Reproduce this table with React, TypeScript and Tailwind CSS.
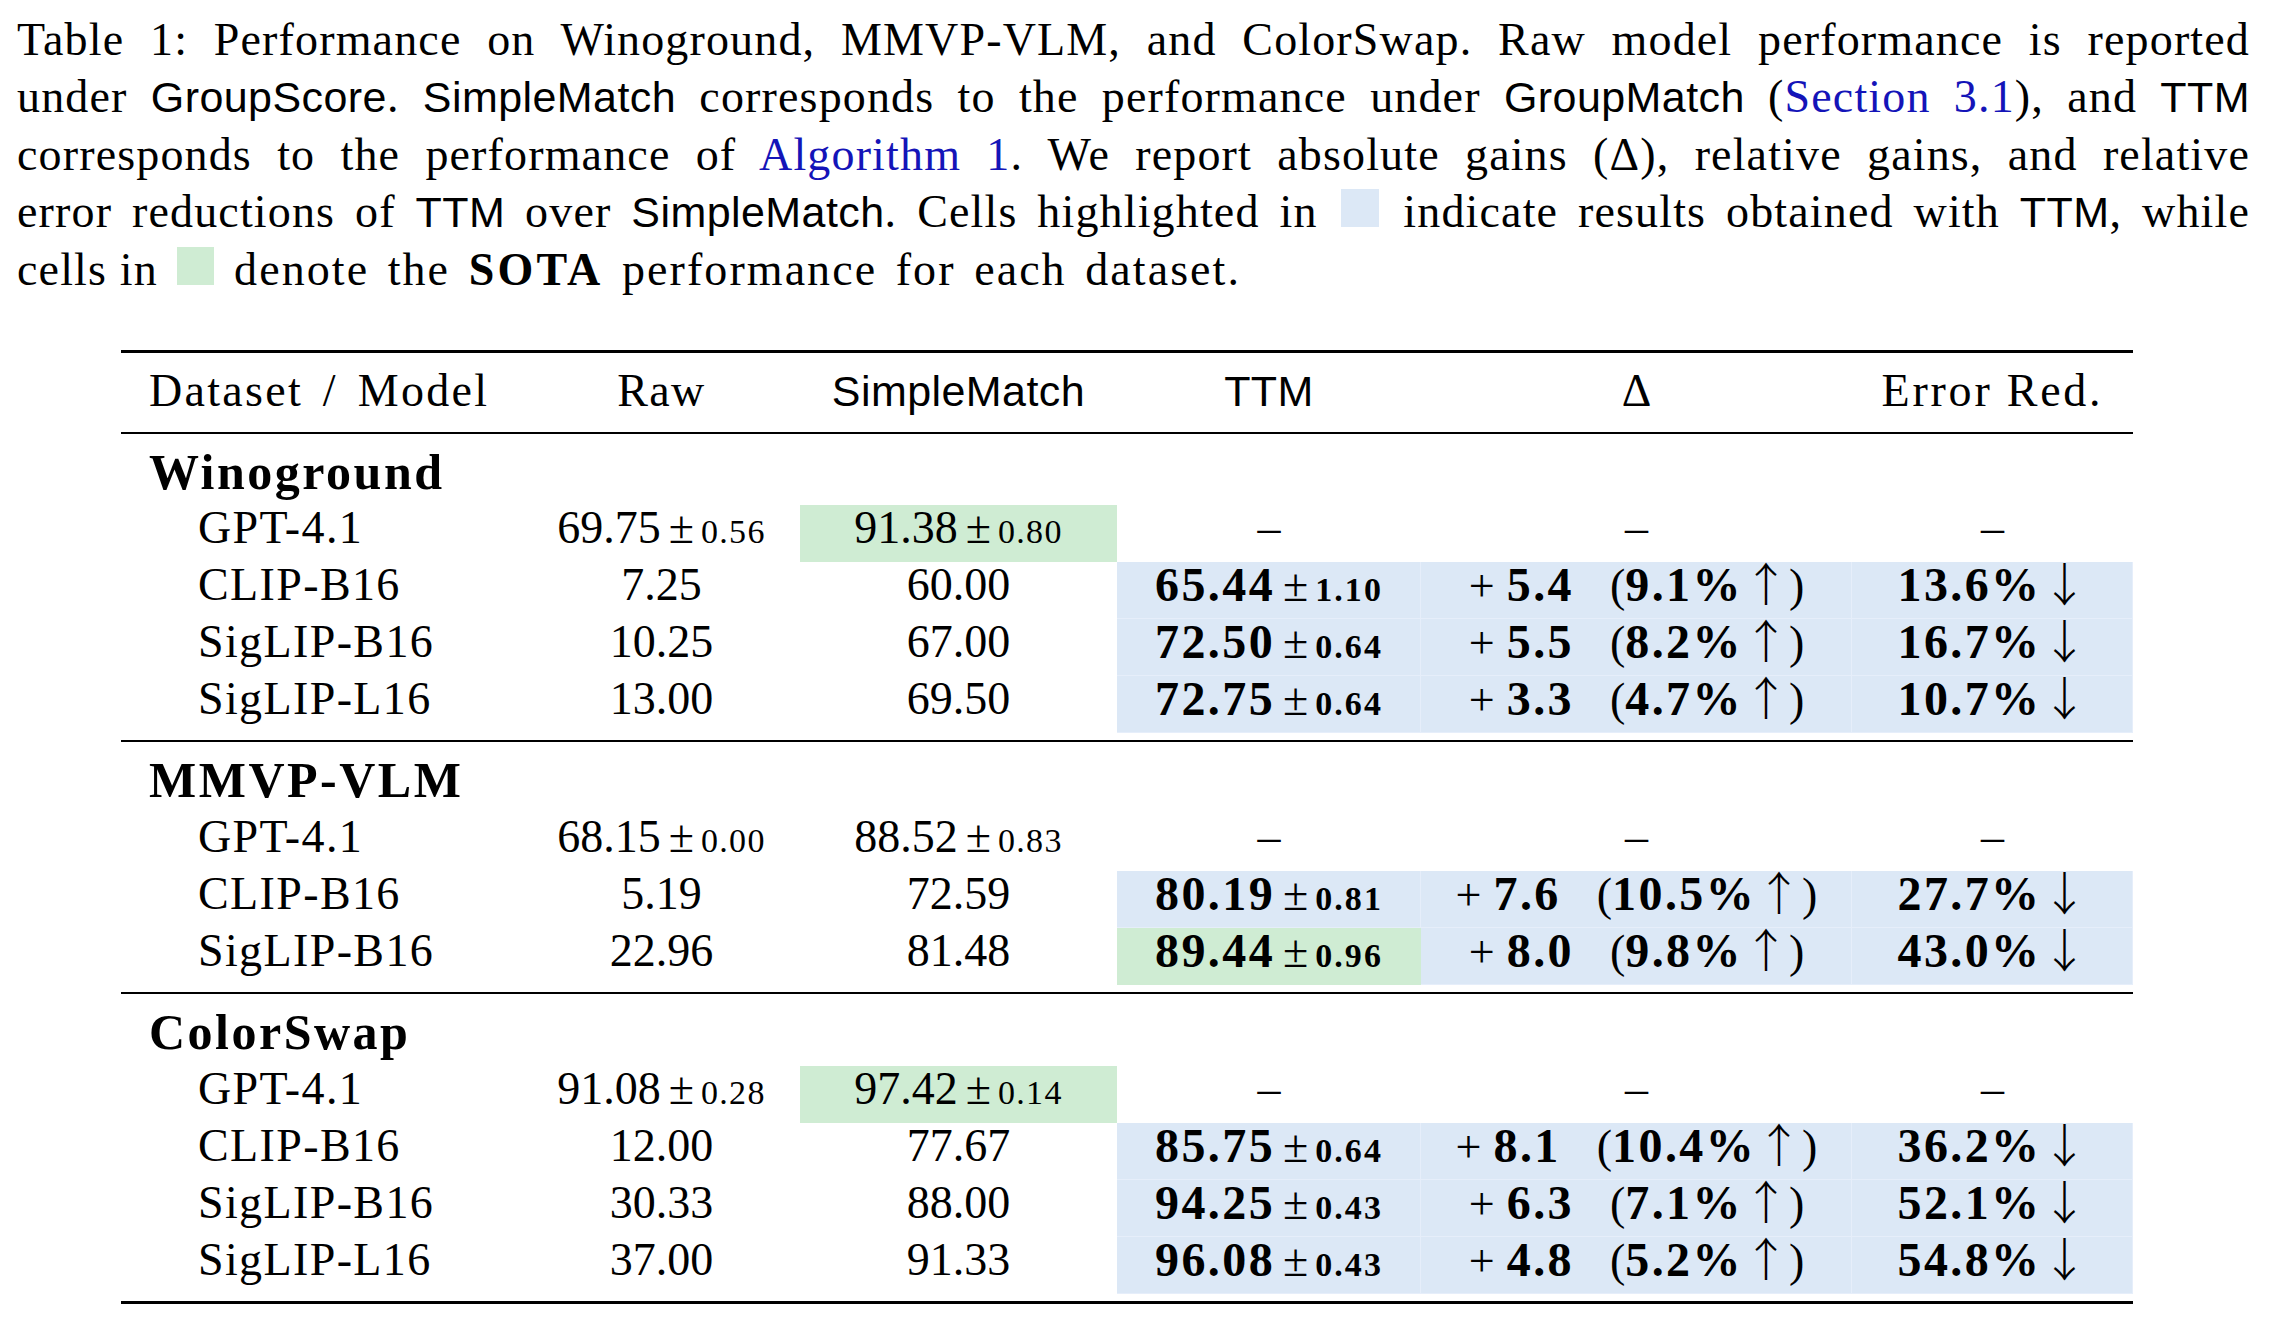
import React from "react";

type C = { v: string; pm?: string; b?: boolean; bg?: "g" | "b" };
type R = {
  name: string;
  raw: C;
  sm: C;
  ttm?: C;
  abs?: string;
  rel?: string;
  er?: string;
};

const sections: { title: string; rows: R[]; last?: boolean }[] = [
  {
    title: "Winoground",
    rows: [
      { name: "GPT-4.1", raw: { v: "69.75", pm: "0.56" }, sm: { v: "91.38", pm: "0.80", bg: "g" } },
      { name: "CLIP-B16", raw: { v: "7.25" }, sm: { v: "60.00" }, ttm: { v: "65.44", pm: "1.10", b: true, bg: "b" }, abs: "5.4", rel: "9.1%", er: "13.6%" },
      { name: "SigLIP-B16", raw: { v: "10.25" }, sm: { v: "67.00" }, ttm: { v: "72.50", pm: "0.64", b: true, bg: "b" }, abs: "5.5", rel: "8.2%", er: "16.7%" },
      { name: "SigLIP-L16", raw: { v: "13.00" }, sm: { v: "69.50" }, ttm: { v: "72.75", pm: "0.64", b: true, bg: "b" }, abs: "3.3", rel: "4.7%", er: "10.7%" },
    ],
  },
  {
    title: "MMVP-VLM",
    rows: [
      { name: "GPT-4.1", raw: { v: "68.15", pm: "0.00" }, sm: { v: "88.52", pm: "0.83" } },
      { name: "CLIP-B16", raw: { v: "5.19" }, sm: { v: "72.59" }, ttm: { v: "80.19", pm: "0.81", b: true, bg: "b" }, abs: "7.6", rel: "10.5%", er: "27.7%" },
      { name: "SigLIP-B16", raw: { v: "22.96" }, sm: { v: "81.48" }, ttm: { v: "89.44", pm: "0.96", b: true, bg: "g" }, abs: "8.0", rel: "9.8%", er: "43.0%" },
    ],
  },
  {
    title: "ColorSwap",
    last: true,
    rows: [
      { name: "GPT-4.1", raw: { v: "91.08", pm: "0.28" }, sm: { v: "97.42", pm: "0.14", bg: "g" } },
      { name: "CLIP-B16", raw: { v: "12.00" }, sm: { v: "77.67" }, ttm: { v: "85.75", pm: "0.64", b: true, bg: "b" }, abs: "8.1", rel: "10.4%", er: "36.2%" },
      { name: "SigLIP-B16", raw: { v: "30.33" }, sm: { v: "88.00" }, ttm: { v: "94.25", pm: "0.43", b: true, bg: "b" }, abs: "6.3", rel: "7.1%", er: "52.1%" },
      { name: "SigLIP-L16", raw: { v: "37.00" }, sm: { v: "91.33" }, ttm: { v: "96.08", pm: "0.43", b: true, bg: "b" }, abs: "4.8", rel: "5.2%", er: "54.8%" },
    ],
  },
];

const GRID = "grid grid-cols-[402px_277px_317px_304px_431px_281px]";

function Sans({ children }: { children: React.ReactNode }) {
  return <span className="font-['Liberation_Sans',sans-serif] text-[43px] tracking-[0.01em]">{children}</span>;
}

function Arrow({ ch }: { ch: string }) {
  return (
    <span className="font-['Noto_Sans_CJK_JP','Liberation_Serif',serif] font-light text-[46px] leading-[30px]">
      {ch}
    </span>
  );
}

function Cell({ bg, children }: { bg?: "g" | "b"; children?: React.ReactNode }) {
  const bgc =
    bg === "g"
      ? "bg-[#cfecd3]"
      : bg === "b"
      ? "bg-[#dce8f6] shadow-[inset_-1px_-1px_0_0_#e6eefa]"
      : "";
  return (
    <div className={`flex justify-center h-full whitespace-nowrap ${bgc}`}>
      <span>{children}</span>
    </div>
  );
}

function Val({ c }: { c: C }) {
  return (
    <>
      <span className={c.b ? "font-bold text-[48px] tracking-[0.05em]" : ""}>{c.v}</span>
      {c.pm && (
        <>
          <span className="ml-[8px]">±</span>
          <span className={`ml-[7px] text-[34px] ${c.b ? "font-bold tracking-[0.06em]" : "tracking-[0.04em]"}`}>{c.pm}</span>
        </>
      )}
    </>
  );
}

function Line({ children, last }: { children: React.ReactNode; last?: boolean }) {
  return (
    <div className={last ? "text-left" : "text-justify [text-align-last:justify]"}>{children}</div>
  );
}

function Caption() {
  const link = "text-[#1414b8]";
  return (
    <div className="pt-[11px] pl-[17px] w-[2250px] text-[46px] leading-[57px] tracking-[0.025em]">
      <Line>Table 1: Performance on Winoground, MMVP-VLM, and ColorSwap. Raw model performance is reported</Line>
      <Line>
        under <Sans>GroupScore</Sans>. <Sans>SimpleMatch</Sans> corresponds to the performance under <Sans>GroupMatch</Sans> (
        <span className={link}>Section 3.1</span>), and <Sans>TTM</Sans>
      </Line>
      <Line>
        corresponds to the performance of <span className={link}>Algorithm 1</span>. We report absolute gains (Δ), relative gains, and relative
      </Line>
      <Line>
        error reductions of <Sans>TTM</Sans> over <Sans>SimpleMatch</Sans>. Cells highlighted in{" "}
        <span className="inline-block w-[38px] h-[38px] bg-[#dce8f6] mx-[4px]"></span> indicate results obtained with <Sans>TTM</Sans>, while
      </Line>
      <Line last>
        cells in <span className="inline-block w-[37px] h-[38px] bg-[#cfecd3] mx-[7px]"></span>{" "}
        <span className="tracking-[0.045em] [word-spacing:5px]">
          denote the <b className="tracking-[0.07em]">SOTA</b> performance for each dataset.
        </span>
      </Line>
    </div>
  );
}

function Dash() {
  return <Cell>–</Cell>;
}

function DataRow({ r }: { r: R }) {
  return (
    <div className={`${GRID} h-[57px] text-[46px] leading-[46px]`}>
      <div className="pl-[77px] tracking-[0.03em] whitespace-nowrap">{r.name}</div>
      <Cell bg={r.raw.bg}>
        <Val c={r.raw} />
      </Cell>
      <Cell bg={r.sm.bg}>
        <Val c={r.sm} />
      </Cell>
      {r.ttm ? (
        <>
          <Cell bg={r.ttm.bg}>
            <Val c={r.ttm} />
          </Cell>
          <Cell bg="b">
            <span>+</span>
            <span className="ml-[12px] font-bold text-[48px] tracking-[0.05em]">{r.abs}</span>
            <span className="ml-[36px]">(</span>
            <span className="font-bold text-[48px] tracking-[0.05em]">{r.rel}</span>
            <Arrow ch="↑" />
            <span>)</span>
          </Cell>
          <Cell bg="b">
            <span className="font-bold text-[48px] tracking-[0.05em]">{r.er}</span>
            <Arrow ch="↓" />
          </Cell>
        </>
      ) : (
        <>
          <Dash />
          <Dash />
          <Dash />
        </>
      )}
    </div>
  );
}

function Table() {
  return (
    <div className="ml-[121px] w-[2012px] mt-[52px]">
      <div className="h-[3px] bg-black"></div>
      <div className={`${GRID} h-[79px] pt-[15px] text-[46px] leading-[46px]`}>
        <div className="pl-[28px] tracking-[0.05em] [word-spacing:6px] whitespace-nowrap">Dataset / Model</div>
        <Cell>
          <span className="tracking-[0.03em]">Raw</span>
        </Cell>
        <Cell>
          <Sans>SimpleMatch</Sans>
        </Cell>
        <Cell>
          <Sans>TTM</Sans>
        </Cell>
        <Cell>Δ</Cell>
        <Cell>
          <span className="tracking-[0.06em]">Error Red.</span>
        </Cell>
      </div>
      <div className="h-[2px] bg-black"></div>
      {sections.map((s, i) => (
        <div key={s.title}>
          <div
            className={`${i === 0 ? "h-[71px]" : "h-[72px]"} pt-[13px] pl-[28px] text-[50px] leading-[50px] font-bold tracking-[0.05em]`}
          >
            {s.title}
          </div>
          {s.rows.map((r) => (
            <DataRow key={s.title + r.name} r={r} />
          ))}
          <div className="h-[7px]"></div>
          <div className={s.last ? "h-[3px] bg-black" : "h-[2px] bg-black"}></div>
        </div>
      ))}
    </div>
  );
}

export default function App() {
  return (
    <div className="w-[2284px] min-h-[1334px] bg-white text-black font-['Liberation_Serif',serif]">
      <Caption />
      <Table />
    </div>
  );
}
